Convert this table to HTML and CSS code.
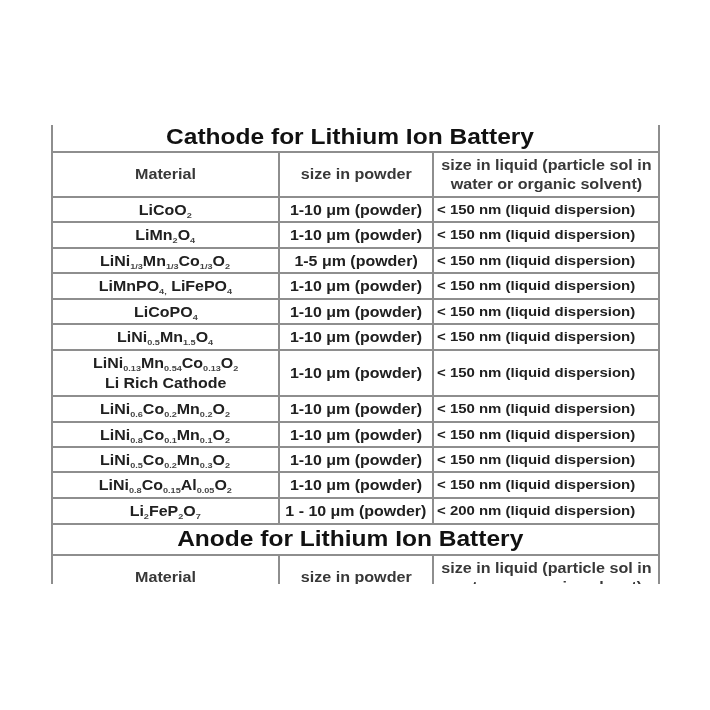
FILE: index.html
```html
<!DOCTYPE html>
<html lang="en">
<head>
<meta charset="utf-8">
<title>Cathode for Lithium Ion Battery</title>
<link rel="stylesheet" href="styles.css">
</head>
<body>
<div class="page">
  <div class="clip">
    <table class="grid">
      <colgroup><col class="c1"><col class="c2"><col class="c3"></colgroup>
      <tbody>
        <tr class="title-row"><td colspan="3" class="title"><span class="t">Cathode for Lithium Ion Battery</span></td></tr>
        <tr class="head-row"><td class="head"><span class="t">Material</span></td><td class="head"><span class="t">size in powder</span></td><td class="head"><span class="t">size in liquid (particle sol in<br>water or organic solvent)</span></td></tr>
        <tr class="r25"><td><span class="t">LiCoO<sub>2</sub></span></td><td><span class="t">1-10 μm (powder)</span></td><td class="lq"><span class="t">&lt; 150 nm (liquid dispersion)</span></td></tr>
        <tr class="r26"><td><span class="t">LiMn<sub>2</sub>O<sub>4</sub></span></td><td><span class="t">1-10 μm (powder)</span></td><td class="lq"><span class="t">&lt; 150 nm (liquid dispersion)</span></td></tr>
        <tr class="r25"><td><span class="t">LiNi<sub>1/3</sub>Mn<sub>1/3</sub>Co<sub>1/3</sub>O<sub>2</sub></span></td><td><span class="t">1-5 μm (powder)</span></td><td class="lq"><span class="t">&lt; 150 nm (liquid dispersion)</span></td></tr>
        <tr class="r26"><td><span class="t">LiMnPO<sub>4,</sub> LiFePO<sub>4</sub></span></td><td><span class="t">1-10 μm (powder)</span></td><td class="lq"><span class="t">&lt; 150 nm (liquid dispersion)</span></td></tr>
        <tr class="r25"><td><span class="t">LiCoPO<sub>4</sub></span></td><td><span class="t">1-10 μm (powder)</span></td><td class="lq"><span class="t">&lt; 150 nm (liquid dispersion)</span></td></tr>
        <tr class="r26"><td><span class="t">LiNi<sub>0.5</sub>Mn<sub>1.5</sub>O<sub>4</sub></span></td><td><span class="t">1-10 μm (powder)</span></td><td class="lq"><span class="t">&lt; 150 nm (liquid dispersion)</span></td></tr>
        <tr class="r46"><td class="two"><span class="t">LiNi<sub>0.13</sub>Mn<sub>0.54</sub>Co<sub>0.13</sub>O<sub>2</sub><br>Li Rich Cathode</span></td><td><span class="t">1-10 μm (powder)</span></td><td class="lq"><span class="t">&lt; 150 nm (liquid dispersion)</span></td></tr>
        <tr class="r26"><td><span class="t">LiNi<sub>0.6</sub>Co<sub>0.2</sub>Mn<sub>0.2</sub>O<sub>2</sub></span></td><td><span class="t">1-10 μm (powder)</span></td><td class="lq"><span class="t">&lt; 150 nm (liquid dispersion)</span></td></tr>
        <tr class="r25"><td><span class="t">LiNi<sub>0.8</sub>Co<sub>0.1</sub>Mn<sub>0.1</sub>O<sub>2</sub></span></td><td><span class="t">1-10 μm (powder)</span></td><td class="lq"><span class="t">&lt; 150 nm (liquid dispersion)</span></td></tr>
        <tr class="r25"><td><span class="t">LiNi<sub>0.5</sub>Co<sub>0.2</sub>Mn<sub>0.3</sub>O<sub>2</sub></span></td><td><span class="t">1-10 μm (powder)</span></td><td class="lq"><span class="t">&lt; 150 nm (liquid dispersion)</span></td></tr>
        <tr class="r26"><td><span class="t">LiNi<sub>0.8</sub>Co<sub>0.15</sub>Al<sub>0.05</sub>O<sub>2</sub></span></td><td><span class="t">1-10 μm (powder)</span></td><td class="lq"><span class="t">&lt; 150 nm (liquid dispersion)</span></td></tr>
        <tr class="r26"><td><span class="t">Li<sub>2</sub>FeP<sub>2</sub>O<sub>7</sub></span></td><td><span class="t">1 - 10 μm (powder)</span></td><td class="lq"><span class="t">&lt; 200 nm (liquid dispersion)</span></td></tr>
        <tr class="anode-row"><td colspan="3" class="title anode"><span class="t">Anode for Lithium Ion Battery</span></td></tr>
        <tr class="head-row"><td class="head"><span class="t">Material</span></td><td class="head"><span class="t">size in powder</span></td><td class="head"><span class="t">size in liquid (particle sol in<br>water or organic solvent)</span></td></tr>
      </tbody>
    </table>
  </div>
</div>
</body>
</html>
```
FILE: styles.css
```css
html, body {
  margin: 0;
  padding: 0;
  background: #ffffff;
}

.page {
  padding: 125px 0 0 51px;
}

.clip {
  width: 610px;
  height: 459px;
  overflow: hidden;
}

.grid {
  border-collapse: collapse;
  table-layout: fixed;
  width: 607px;
  font-family: "Liberation Sans", Arial, sans-serif;
  font-weight: bold;
  color: #202020;
  filter: blur(0.35px);
}

.c1 { width: 227px; }
.c2 { width: 154px; }
.c3 { width: 226px; }

.grid td {
  border: 2px solid #8e8e8e;
  padding: 0;
  text-align: center;
  vertical-align: middle;
  font-size: 14px;
  line-height: 18px;
  white-space: nowrap;
  overflow: hidden;
}

.t {
  display: inline-block;
  transform: scaleX(1.14);
  transform-origin: center;
}

.grid td.lq {
  font-size: 13px;
  text-align: left;
  padding-left: 3px;
}

.grid td.lq .t {
  transform: scaleX(1.15);
  transform-origin: left center;
}

.grid td.title {
  border-top: none;
  font-size: 22px;
  line-height: 24px;
  color: #111111;
  padding: 0 11px 2px 0;
}

.grid td.title .t {
  transform: scaleX(1.115);
}

.grid td.anode {
  border-top: 2px solid #8e8e8e;
}

.grid td.head {
  font-size: 14px;
  line-height: 19px;
  color: #383838;
}

.grid td.head .t {
  transform: scaleX(1.15);
}

.grid td.two {
  line-height: 20px;
}

.grid sub {
  font-size: 8px;
  vertical-align: -3px;
  line-height: 0;
  color: #444444;
}

.title-row { height: 27px; }
.head-row { height: 45px; }
.r25 { height: 25px; }
.r26 { height: 26px; }
.r46 { height: 46px; }
.anode-row { height: 31px; }
```
